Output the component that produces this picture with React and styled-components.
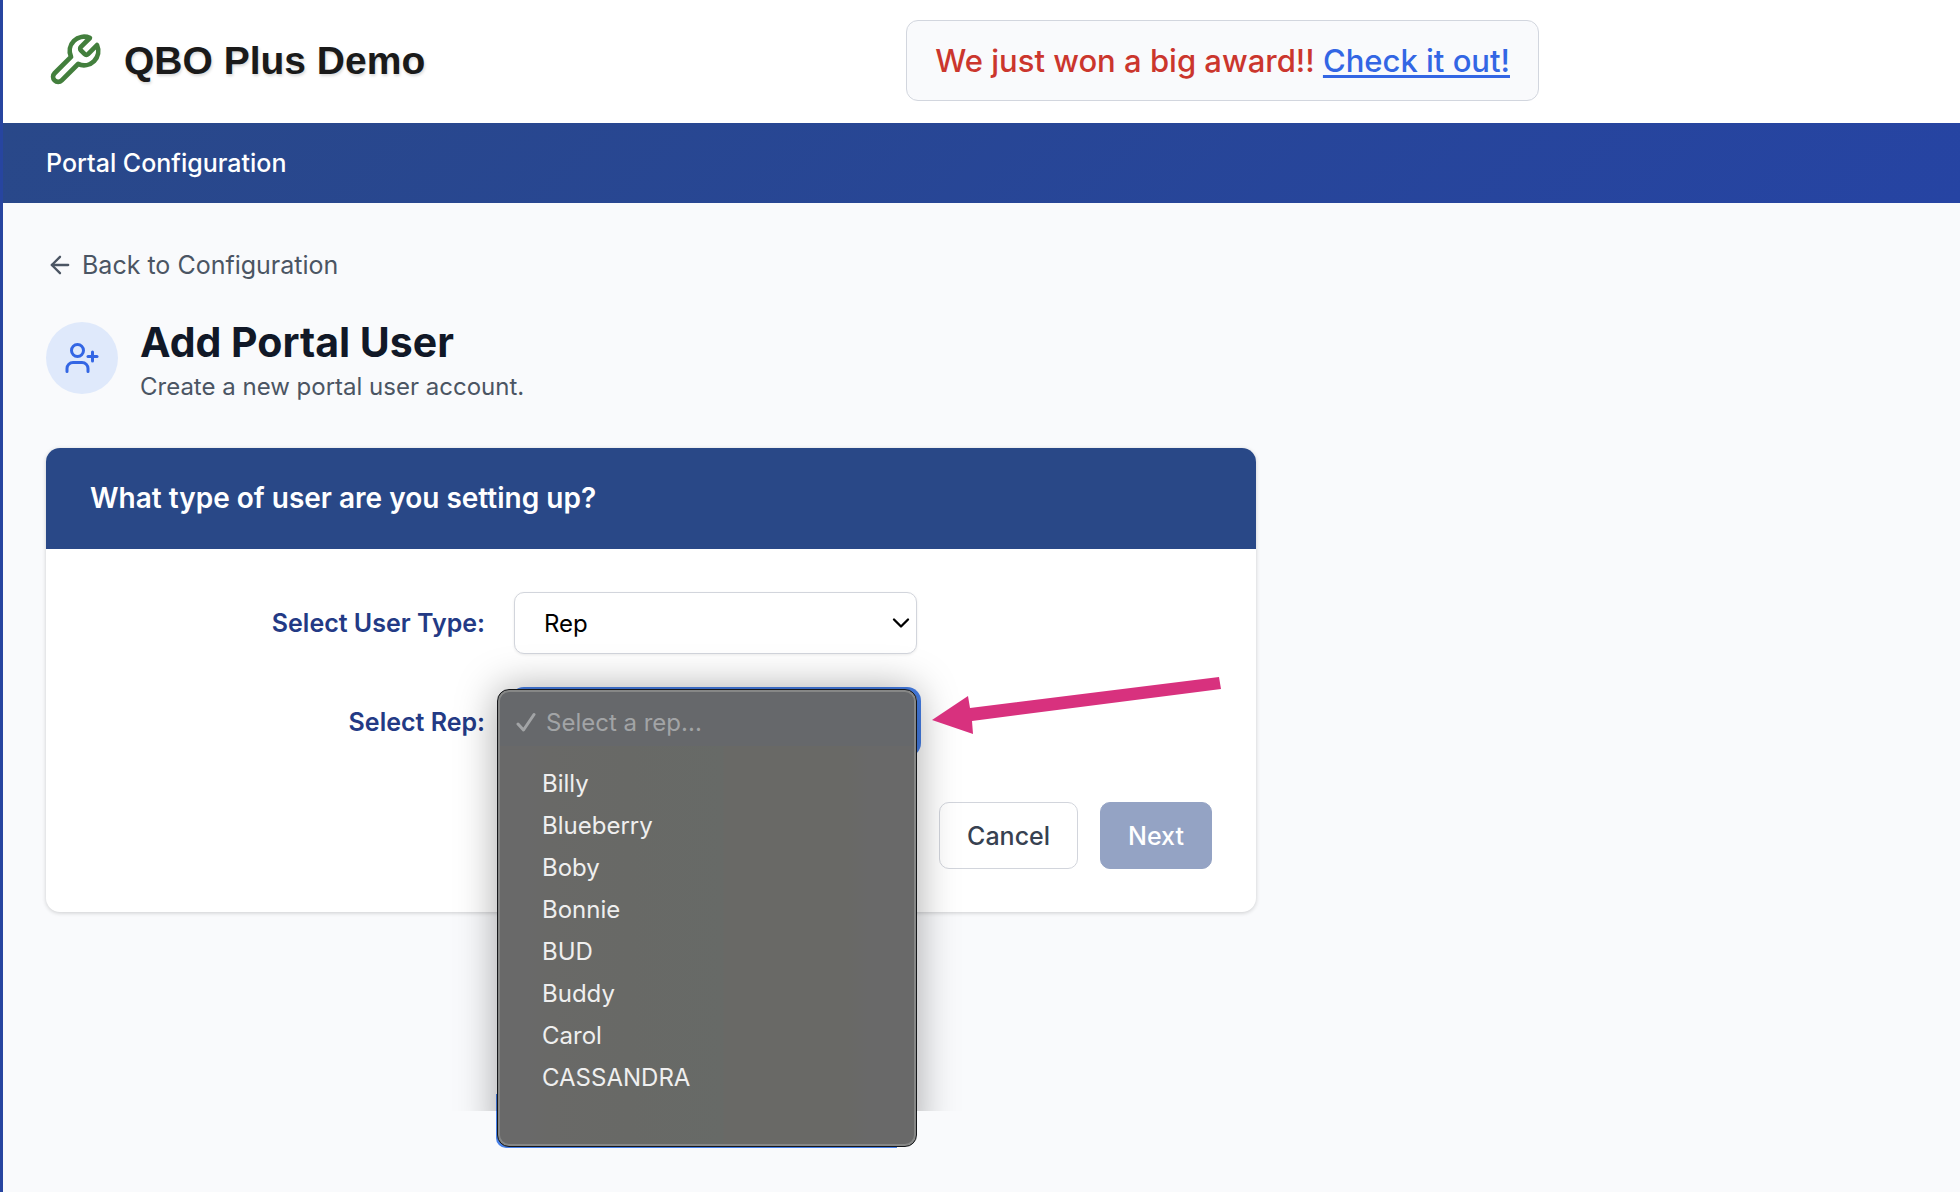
import React, { useState } from "react";
import styled, { createGlobalStyle } from "styled-components";
import { ArrowLeft, ChevronDown, UserPlus } from "lucide-react";

const GlobalStyle = createGlobalStyle`
  * {
    box-sizing: border-box;
  }

  body {
    margin: 0;
    background: #f9fafc;
    font-family: Inter, "Liberation Sans", sans-serif;
    color: #111827;
  }
`;

const Page = styled.div`
  min-height: 100vh;
  border-left: 3px solid #2745a0;
`;

const Header = styled.header`
  display: flex;
  align-items: center;
  gap: 60px;
  padding: 20px 0 22px 43px;
  background: #fff;
`;

const Brand = styled.div`
  display: flex;
  align-items: center;
  gap: 21px;
`;

const BrandName = styled.span`
  font-family: "Liberation Sans", Arial, sans-serif;
  font-size: 39px;
  font-weight: 700;
  line-height: 48px;
  color: #1a1a1a;
  white-space: nowrap;
  text-shadow: 1px 2px 3px rgba(0, 0, 0, 0.15);
`;

const BannerArea = styled.div`
  flex: 1;
  display: flex;
  justify-content: center;
`;

const Banner = styled.p`
  margin: 0;
  padding: 20px 28px;
  border: 1px solid #d2d6de;
  border-radius: 12px;
  background: #f9fafc;
  font-size: 31px;
  font-weight: 500;
  line-height: 39px;
  color: #cb362d;
`;

const BannerLink = styled.a`
  color: #3366e4;
  text-decoration: underline;
  text-decoration-thickness: 3px;
  text-decoration-skip-ink: none;
  text-underline-offset: 3px;
`;

const NavBar = styled.nav`
  padding: 24px 43px;
  background: linear-gradient(135deg, #294889 0%, #2644a3 100%);
`;

const NavLink = styled.a`
  display: block;
  font-size: 25px;
  font-weight: 500;
  line-height: 32px;
  color: #fff;
  text-decoration: none;
`;

const Main = styled.main`
  padding: 44px 43px;
`;

const BackLink = styled.a`
  display: inline-flex;
  align-items: center;
  gap: 8px;
  font-size: 25px;
  line-height: 36px;
  color: #4b5563;
  text-decoration: none;
`;

const Intro = styled.div`
  display: flex;
  align-items: flex-start;
  gap: 22px;
  margin: 34px 0 41px;
`;

const Avatar = styled.div`
  display: flex;
  align-items: center;
  justify-content: center;
  width: 72px;
  height: 72px;
  margin-top: 5px;
  border-radius: 50%;
  background: #dfe9fb;
`;

const Title = styled.h1`
  margin: 0;
  font-size: 41px;
  font-weight: 700;
  line-height: 50px;
`;

const Subtitle = styled.p`
  margin: 0;
  font-size: 24px;
  line-height: 40px;
  color: #4b5563;
`;

const Card = styled.section`
  max-width: 1210px;
  border-radius: 14px;
  background: #fff;
  box-shadow: 0 1px 4px rgba(0, 0, 0, 0.18);
`;

const CardTitle = styled.h2`
  margin: 0;
  padding: 32px 44px;
  border-radius: 14px 14px 0 0;
  background: #294887;
  font-size: 28px;
  font-weight: 600;
  line-height: 37px;
  color: #fff;
`;

const Form = styled.form`
  display: flex;
  flex-direction: column;
  gap: 37px;
  padding: 43px 44px;
`;

const FieldRow = styled.div`
  display: grid;
  grid-template-columns: 395fr 403fr 266fr;
  align-items: center;
  gap: 29px;
`;

const Label = styled.label`
  font-size: 25px;
  font-weight: 600;
  line-height: 32px;
  text-align: right;
  color: #233a85;
`;

const SelectWrap = styled.div`
  position: relative;
`;

const Select = styled.select`
  appearance: none;
  display: block;
  width: 100%;
  height: 62px;
  padding: 0 29px;
  border: 1px solid #d2d5dc;
  border-radius: 10px;
  outline: none;
  background: #fff;
  box-shadow: ${(props) => (props.$open ? "0 0 0 4px #467fe8" : "0 1px 3px rgba(0, 0, 0, 0.08)")};
  font-family: inherit;
  font-size: 24px;
  color: #000;
`;

const Chevron = styled(ChevronDown)`
  position: absolute;
  top: 17px;
  right: 2px;
  pointer-events: none;
`;

const Menu = styled.div`
  position: absolute;
  z-index: 1;
  top: -2px;
  left: -17px;
  right: 0;
  height: 458px;

  /* focus ring peeking out at the lower left */
  &::before {
    content: "";
    position: absolute;
    z-index: -2;
    left: -1px;
    right: 20px;
    bottom: -1px;
    height: 54px;
    border-radius: 0 0 0 10px;
    background: #467fe8;
  }

  /* the shadow stops short of the bottom edge */
  &::after {
    content: "";
    position: absolute;
    z-index: -1;
    inset: 0;
    border-radius: 12px;
    box-shadow: 0 0 40px rgba(0, 0, 0, 0.35);
    clip-path: inset(-60px -60px 36px -60px);
  }
`;

const Options = styled.ul`
  height: 100%;
  margin: 0;
  padding: 10px 0;
  border: 1px solid #15171a;
  border-radius: 12px;
  list-style: none;
  background:
    linear-gradient(#66686b, #66686b) 0 0 / 100% 56px no-repeat,
    linear-gradient(90deg, #696969 0 30px, #696967 50px, #686966 130px, #676a67 225px, #696966 226px 350px, #696969 370px);
  box-shadow: inset 0 0 0 2px #868786;
`;

const Option = styled.li`
  display: flex;
  align-items: center;
  height: 42px;
  padding-left: 44px;
  font-size: 24px;
  color: #efefef;
`;

const Placeholder = styled(Option)`
  gap: 10px;
  height: 44px;
  margin-bottom: 18px;
  padding-left: 18px;
  color: #a2a4a6;
`;

const Arrow = styled.svg`
  position: absolute;
  z-index: 2;
  top: -15px;
  left: calc(100% + 15px);
`;

const Actions = styled.div`
  display: flex;
  justify-content: flex-end;
  gap: 22px;
  margin-top: 12px;
`;

const Button = styled.button`
  padding: 0 27px;
  height: 67px;
  border: 1px solid ${(props) => (props.$primary ? "#94a3c4" : "#d2d5dc")};
  border-radius: 10px;
  background: ${(props) => (props.$primary ? "#94a3c4" : "#fff")};
  font-family: inherit;
  font-size: 25px;
  font-weight: 500;
  color: ${(props) => (props.$primary ? "#fff" : "#374151")};
`;

const userTypes = ["Rep"];
const reps = ["Billy", "Blueberry", "Boby", "Bonnie", "BUD", "Buddy", "Carol", "CASSANDRA"];

function WrenchIcon() {
  return (
    <svg
      width="57"
      height="57"
      viewBox="0 0 24 24"
      fill="none"
      stroke="#437f3d"
      strokeWidth="2"
      strokeLinecap="round"
      strokeLinejoin="round"
      aria-hidden="true"
    >
      <path d="M14.7 6.3a1 1 0 0 0 0 1.4l1.6 1.6a1 1 0 0 0 1.4 0l3.77-3.77a6 6 0 0 1-7.94 7.94l-6.91 6.91a2.12 2.12 0 0 1-3-3l6.91-6.91a6 6 0 0 1 7.94-7.94l-3.76 3.76z" />
    </svg>
  );
}

function RepMenu({ onPick }) {
  return (
    <Menu>
      <Options role="listbox" aria-label="Reps">
        <Placeholder role="option" aria-selected="true">
          <svg width="20" height="20" viewBox="0 0 20 20" fill="none" stroke="currentColor" strokeWidth="3" strokeLinecap="round" strokeLinejoin="round" aria-hidden="true">
            <path d="M2 12 7.5 18 18 2.5" />
          </svg>
          Select a rep...
        </Placeholder>
        {reps.map((rep) => (
          <Option role="option" aria-selected="false" key={rep} onClick={() => onPick(rep)}>
            {rep}
          </Option>
        ))}
      </Options>
    </Menu>
  );
}

function App() {
  const [rep, setRep] = useState("");
  const [open, setOpen] = useState(true);

  const pickRep = (name) => {
    setRep(name);
    setOpen(false);
  };

  return (
    <Page>
      <GlobalStyle />
      <Header>
        <Brand>
          <WrenchIcon />
          <BrandName>QBO Plus Demo</BrandName>
        </Brand>
        <BannerArea>
          <Banner>
            We just won a big award!! <BannerLink href="#award">Check it out!</BannerLink>
          </Banner>
        </BannerArea>
      </Header>
      <NavBar>
        <NavLink href="#config">Portal Configuration</NavLink>
      </NavBar>
      <Main>
        <BackLink href="#back">
          <ArrowLeft size={28} />
          Back to Configuration
        </BackLink>
        <Intro>
          <Avatar>
            <UserPlus size={36} color="#3366e4" />
          </Avatar>
          <div>
            <Title>Add Portal User</Title>
            <Subtitle>Create a new portal user account.</Subtitle>
          </div>
        </Intro>
        <Card>
          <CardTitle>What type of user are you setting up?</CardTitle>
          <Form>
            <FieldRow>
              <Label htmlFor="user-type">Select User Type:</Label>
              <SelectWrap>
                <Select id="user-type">
                  {userTypes.map((type) => (
                    <option key={type}>{type}</option>
                  ))}
                </Select>
                <Chevron size={28} color="#000" />
              </SelectWrap>
            </FieldRow>
            <FieldRow>
              <Label htmlFor="rep">Select Rep:</Label>
              <SelectWrap>
                <Select id="rep" $open={open} value={rep} onChange={(e) => pickRep(e.target.value)}>
                  <option value="">{open ? "" : "Select a rep..."}</option>
                  {reps.map((name) => (
                    <option key={name}>{name}</option>
                  ))}
                </Select>
                {open && <RepMenu onPick={pickRep} />}
                <Arrow width="290" height="60" viewBox="0 0 290 60" aria-hidden="true">
                  <path d="M0 44 36 20 38 32 287 1 289 13 40 45 41 58Z" fill="#d8317e" />
                </Arrow>
              </SelectWrap>
            </FieldRow>
            <Actions>
              <Button type="button">Cancel</Button>
              <Button type="button" $primary disabled>
                Next
              </Button>
            </Actions>
          </Form>
        </Card>
      </Main>
    </Page>
  );
}

export default App;
